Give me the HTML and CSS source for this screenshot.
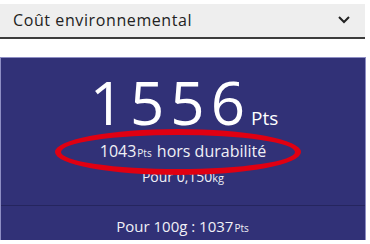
FILE: index.html
```html
<!DOCTYPE html>
<html>
<head>
<meta charset="utf-8">
<title>Coût environnemental</title>
	<link rel="stylesheet" href="styles.css">
</head>
<body>
	<div class="select">
		<span>Coût environnemental</span>
		<svg class="chevron" width="14" height="9" viewBox="0 0 14 9"><path d="M2 2l5 5 5-5" fill="none" stroke="#222" stroke-width="2"/></svg>
	</div>

	<section class="score">
		<div class="score-main">
			<div class="total">1556<small>Pts</small></div>
			<div class="hors">1043<small>Pts</small> hors durabilité</div>
			<div class="weight">Pour 0,150<small>kg</small></div>
			<div class="circle"></div>
		</div>
		<div class="score-foot">Pour 100g : 1037<small>Pts</small></div>
	</section>
</body>
</html>
```

FILE: styles.css
```css
body {
	font-family: "Open Sans", Lato, sans-serif;
	margin: 0;
	padding: 0;
	background: white;
}
small {
	line-height: 0;
}
.select {
	margin-top: 4px;
	width: 365px;
	height: 35px;
	box-sizing: border-box;
	background: #eeeeee;
	border-bottom: 2px solid #3c3c3c;
	display: flex;
	align-items: center;
	justify-content: space-between;
	padding: 0 14px 2px 13px;
	font-size: 16px;
	letter-spacing: 0.6px;
	color: #222;
}
.score {
	margin-top: 18px;
	width: 366px;
	box-sizing: border-box;
	background: #313177;
	border: 1px solid #8e8ec4;
	border-bottom: 0;
	color: #fff;
	text-align: center;
}
.score-main {
	position: relative;
	padding: 15px 0 19px;
	border-bottom: 1px solid #25255e;
}
.total {
	font-size: 60px;
	line-height: 58px;
	letter-spacing: 6px;
	padding-left: 2px;
}
.total small {
	font-size: 19px;
	letter-spacing: 0;
}
.hors {
	font-size: 16px;
	line-height: 20px;
	margin-top: 10px;
	color: #f0f0f6;
}
.hors small, .score-foot small {
	font-size: 10px;
	margin: 0 1px 0 1px;
}
.weight {
	font-size: 14px;
	line-height: 18px;
	margin-top: 7px;
	color: #f0f0f6;
}
.weight small {
	font-size: 11px;
}
.circle {
	position: absolute;
	left: 54px;
	top: 71px;
	width: 246px;
	height: 46px;
	box-sizing: border-box;
	border: 6px solid #e00012;
	border-radius: 50%;
}
.score-foot {
	font-size: 15px;
	line-height: 20px;
	padding: 10px 0 4px;
	color: #f0f0f6;
}
```
